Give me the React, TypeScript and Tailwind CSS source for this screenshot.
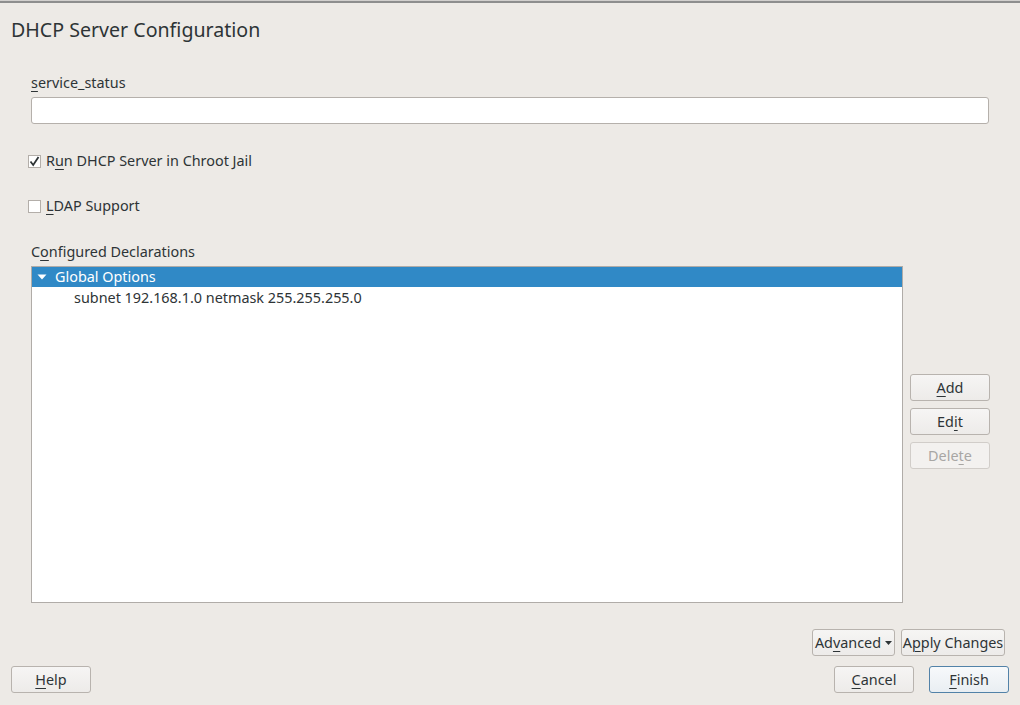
import { ReactNode } from "react"

function U({ children }: { children: ReactNode }) {
  return <span className="underline underline-offset-[3px] decoration-1">{children}</span>
}

function Btn({ children, className = "", disabled = false, primary = false }: { children: ReactNode; className?: string; disabled?: boolean; primary?: boolean }) {
  const tone = disabled
    ? "border-[#d1cdc9] bg-[#f3f1ef] text-[#a8a6a4]"
    : primary
      ? "border-[#5282a8] bg-gradient-to-b from-[#f7f9fb] to-[#e9eef2] text-[#2e3436]"
      : "border-[#b8b3ae] bg-gradient-to-b from-[#f6f5f4] to-[#edebe9] text-[#2e3436]"
  return (
    <div className={`h-[27px] shrink-0 flex items-center justify-center rounded-[3px] border text-[14.4px] ${tone} ${className}`}>
      {children}
    </div>
  )
}

function Check({ checked }: { checked: boolean }) {
  return (
    <div className="w-[13px] h-[13px] bg-white border border-[#b3aea9] flex items-center justify-center">
      {checked && (
        <svg width="11" height="11" viewBox="0 0 11 11">
          <path d="M1.5 5.5 L4.2 9 L9.5 1" fill="none" stroke="#2e3436" strokeWidth="1.8" />
        </svg>
      )}
    </div>
  )
}

export default function App() {
  return (
    <div className="w-[1020px] h-[705px] bg-[#edeae6] flex flex-col text-[#2e3436] text-[14.4px] overflow-hidden" style={{ fontFamily: '"Noto Sans", "Open Sans", sans-serif' }}>
      <div className="h-[3px] bg-[#d2d0ce] border-b-2 border-[#8e8e8e]" />
      <h1 className="mt-[15px] ml-[11px] text-[19.6px] leading-[24px]">DHCP Server Configuration</h1>

      <div className="pl-[31px] pr-[31px] flex flex-col">
        <div className="mt-[32px] leading-[18px]"><U>s</U>ervice_status</div>
        <div className="mt-[5px] h-[27px] bg-white border border-[#b5b0ab] rounded-[3px]" />

        <div className="mt-[28px] h-[18px] flex items-center gap-[5px] -ml-[3px]">
          <Check checked />
          <span>R<U>u</U>n DHCP Server in Chroot Jail</span>
        </div>
        <div className="mt-[27px] h-[18px] flex items-center gap-[5px] -ml-[3px]">
          <Check checked={false} />
          <span><U>L</U>DAP Support</span>
        </div>

        <div className="mt-[28px] leading-[18px]">C<U>o</U>nfigured Declarations</div>
        <div className="mt-[5px] flex gap-[7px]">
          <div className="w-[872px] shrink-0 h-[337px] bg-white border border-[#b0aca8] flex flex-col">
            <div className="h-[20px] bg-[#3089c6] text-white flex items-center">
              <svg width="10" height="10" viewBox="0 0 10 10" className="ml-[5px] mr-[8px]">
                <path d="M0.5 2.5 L9.5 2.5 L5 7.5 Z" fill="#ffffff" />
              </svg>
              <span>Global Options</span>
            </div>
            <div className="h-[22px] flex items-center pl-[42px]">subnet 192.168.1.0 netmask 255.255.255.0</div>
          </div>
          <div className="mt-[108px] shrink-0 flex flex-col gap-[7px]">
            <Btn className="w-[80px]"><U>A</U>dd</Btn>
            <Btn className="w-[80px]">Ed<U>i</U>t</Btn>
            <Btn className="w-[80px]" disabled>Dele<U>t</U>e</Btn>
          </div>
        </div>
      </div>

      <div className="mt-[26px] flex justify-end gap-[6px] pr-[15px]">
        <Btn className="w-[83px] gap-[4px]">
          <span>Ad<U>v</U>anced</span>
          <svg width="7" height="4" viewBox="0 0 7 4"><path d="M0 0 L7 0 L3.5 4 Z" fill="#2e3436" /></svg>
        </Btn>
        <Btn className="w-[104px]">A<U>p</U>ply Changes</Btn>
      </div>
      <div className="mt-[10px] flex items-center px-[11px]">
        <Btn className="w-[80px]"><U>H</U>elp</Btn>
        <div className="flex-1" />
        <Btn className="w-[80px]"><U>C</U>ancel</Btn>
        <Btn className="w-[80px] ml-[15px]" primary><U>F</U>inish</Btn>
      </div>
    </div>
  )
}
